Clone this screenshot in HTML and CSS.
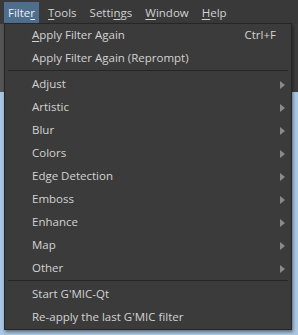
FILE: index.html
```html
<!DOCTYPE html>
<html>
<head>
<meta charset="utf-8">
<link rel="stylesheet" href="styles.css">
</head>
<body>
<div class="app">
  <div class="menubar">
    <span class="mb-item active">Filte<u>r</u></span>
    <span class="mb-item"><u>T</u>ools</span>
    <span class="mb-item">Setti<u>n</u>gs</span>
    <span class="mb-item"><u>W</u>indow</span>
    <span class="mb-item"><u>H</u>elp</span>
  </div>
  <div class="workspace">
    <div class="toolstrip"></div>
    <div class="canvas"></div>
  </div>
  <div class="menu">
    <div class="item"><span class="label"><u>A</u>pply Filter Again</span><span class="shortcut">Ctrl+F</span></div>
    <div class="item"><span class="label">Apply Filter Again (Reprompt)</span></div>
    <div class="sep"></div>
    <div class="item sub"><span class="label">Adjust</span><span class="arrow"></span></div>
    <div class="item sub"><span class="label">Artistic</span><span class="arrow"></span></div>
    <div class="item sub"><span class="label">Blur</span><span class="arrow"></span></div>
    <div class="item sub"><span class="label">Colors</span><span class="arrow"></span></div>
    <div class="item sub"><span class="label">Edge Detection</span><span class="arrow"></span></div>
    <div class="item sub"><span class="label">Emboss</span><span class="arrow"></span></div>
    <div class="item sub"><span class="label">Enhance</span><span class="arrow"></span></div>
    <div class="item sub"><span class="label">Map</span><span class="arrow"></span></div>
    <div class="item sub"><span class="label">Other</span><span class="arrow"></span></div>
    <div class="sep"></div>
    <div class="item"><span class="label">Start G'MIC-Qt</span></div>
    <div class="item"><span class="label">Re-apply the last G'MIC filter</span></div>
  </div>
</div>
</body>
</html>
```

FILE: styles.css
```css
html, body {
  margin: 0;
  padding: 0;
  width: 298px;
  height: 335px;
  overflow: hidden;
}
body {
  font-family: "Open Sans", "Liberation Sans", sans-serif;
  font-size: 11.5px;
  color: #d3d3d3;
  background: #a9c6e2;
}
.app {
  position: relative;
  width: 298px;
  height: 335px;
  display: flex;
  flex-direction: column;
}
.menubar {
  height: 24px;
  background: #393939;
  display: flex;
  align-items: stretch;
  padding: 2px 0 0 4px;
  box-sizing: border-box;
}
.mb-item {
  padding: 0 4px;
  margin-right: 5px;
  line-height: 21px;
  color: #d2d2d2;
}
.mb-item.active {
  background: #4f6d8c;
  color: #e6eef6;
}
.workspace {
  flex: 1;
  display: flex;
  flex-direction: column;
}
.toolstrip {
  height: 68px;
  background: #3c3c3c;
  border-left: 4px solid #555;
}
.canvas {
  flex: 1;
  background: #a9c6e2;
}
.menu {
  position: absolute;
  left: 4px;
  top: 23px;
  width: 288px;
  box-sizing: border-box;
  background: #3b3b3b;
  border: 1px solid #262626;
  padding: 0;
  box-shadow: 1px 2px 3px rgba(0, 0, 0, 0.45);
}
.item {
  height: 23px;
  box-sizing: border-box;
  display: flex;
  align-items: center;
  padding: 0 15px 2px 27px;
}
.label {
  flex: 1;
  white-space: nowrap;
}
.arrow {
  width: 0;
  height: 0;
  border-top: 4px solid transparent;
  border-bottom: 4px solid transparent;
  border-left: 5px solid #8a8a8a;
  margin-right: -9px;
  margin-top: 2px;
}
.sep {
  height: 1px;
  background: #262626;
  margin: 0 3px 2px 3px;
}
u {
  text-decoration: underline;
  text-underline-offset: 2px;
}
```
